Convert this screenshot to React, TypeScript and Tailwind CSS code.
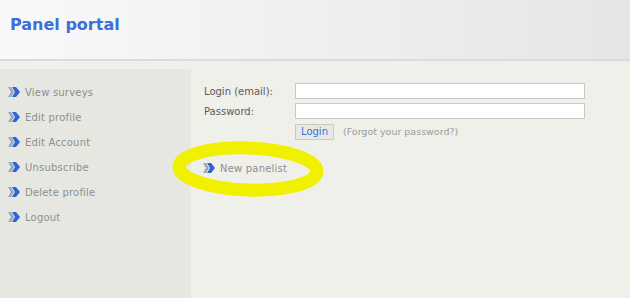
import React from 'react';

const font = { fontFamily: 'Tahoma, "DejaVu Sans", Verdana, sans-serif' };

// double chevron bullet used in the menus
const Bullet = () => (
  <svg width="12" height="10" viewBox="0 0 12 10" className="shrink-0 -mt-[1px]">
    <path d="M0 0 H3 L6 5 L3 10 H0 L3 5 Z" fill="#9aa6c0" />
    <path d="M4 0 H8 L12 5 L8 10 H4 L7 5 Z" fill="#2f63d8" />
  </svg>
);

const MenuLink: React.FC<{ label: string }> = ({ label }) => (
  <a className="flex items-center gap-[5px] h-[25px] text-[10px] tracking-[0.2px] text-[#8e8e8e] cursor-pointer">
    <Bullet />
    <span>{label}</span>
  </a>
);

const menu = ['View surveys', 'Edit profile', 'Edit Account', 'Unsubscribe', 'Delete profile', 'Logout'];

export default function App() {
  return (
    <div className="relative w-[630px] h-[298px] overflow-hidden bg-[#f0f0eb]" style={font}>
      {/* Header */}
      <div className="h-[61px] bg-gradient-to-r from-[#f9f9f9] to-[#e6e6e6] border-b-2 border-[#dcdcd4] flex items-center pl-[10px] pb-[10px]">
        <h1 className="text-[16px] font-bold text-[#3a6fdc]">Panel portal</h1>
      </div>

      <div className="flex mt-[8px] h-[229px]">
        {/* Sidebar */}
        <div className="w-[191px] bg-[#e7e7e1] pl-[8px] pt-[11px]">
          {menu.map(m => <MenuLink key={m} label={m} />)}
        </div>

        {/* Login form */}
        <div className="flex-1 pl-[13px] pt-[12px]">
          <div className="flex items-center h-[20px]">
            <label className="w-[91px] text-[10px] text-[#5a5a5a]">Login (email):</label>
            <input className="w-[290px] h-[16px] bg-white border border-[#c8c8c4] outline-none" />
          </div>
          <div className="flex items-center h-[20px]">
            <label className="w-[91px] text-[10px] text-[#5a5a5a]">Password:</label>
            <input type="password" className="w-[290px] h-[16px] bg-white border border-[#c8c8c4] outline-none" />
          </div>
          <div className="flex items-center h-[20px] pl-[91px] mt-[1px]">
            <button className="h-[16px] px-[5px] bg-[#e8e8e3] border border-[#c8c8c4] text-[10px] leading-none text-[#3a6fdc]">Login</button>
            <span className="ml-[9px] text-[9.5px] text-[#9a9a9a]">(Forgot your password?)</span>
          </div>
          <div className="mt-[14px] -ml-[1px]">
            <MenuLink label="New panelist" />
          </div>
        </div>
      </div>

      {/* yellow marker scribble */}
      <svg className="absolute left-[168px] top-[137px] pointer-events-none" width="160" height="64" viewBox="0 0 160 64">
        <ellipse cx="80" cy="32" rx="69" ry="21" fill="none" stroke="#f0f000" strokeWidth="13" transform="rotate(2 80 32)" />
      </svg>
    </div>
  );
}
